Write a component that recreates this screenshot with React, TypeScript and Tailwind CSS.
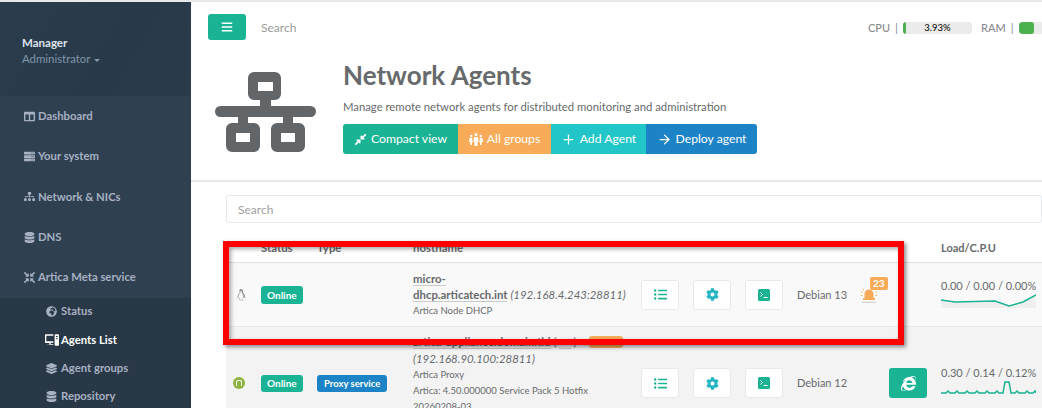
import type { ReactNode } from "react";
import {
  FaBars,
  FaColumns,
  FaCompressAlt,
  FaCompressArrowsAlt,
  FaCog,
  FaDatabase,
  FaGlobeAfrica,
  FaInternetExplorer,
  FaLayerGroup,
  FaLinux,
  FaListUl,
  FaServer,
  FaSitemap,
} from "react-icons/fa";
import { ArrowRight, Plus } from "lucide-react";

const menu = [
  { label: "Dashboard", icon: <FaColumns /> },
  { label: "Your system", icon: <FaServer /> },
  { label: "Network & NICs", icon: <FaSitemap /> },
  { label: "DNS", icon: <FaDatabase /> },
  { label: "Artica Meta service", icon: <FaCompressArrowsAlt /> },
];

const submenu = [
  { label: "Status", icon: <FaGlobeAfrica />, active: false },
  { label: "Agents List", icon: <AgentsIcon />, active: true },
  { label: "Agent groups", icon: <FaLayerGroup />, active: false },
  { label: "Repository", icon: <FaDatabase />, active: false },
];

function AgentsIcon() {
  return (
    <svg viewBox="0 0 16 13" className="h-[12px] w-[14px] shrink-0" fill="currentColor">
      <path d="M0 1a1 1 0 0 1 1-1h8.500v1.500H1.500v6.500h8v1.500H6.500v1.500h3V12H2.500v-.500h2.500V10H1a1 1 0 0 1-1-1z" />
      <path d="M11 1a1 1 0 0 1 1-1h3a1 1 0 0 1 1 1v11a1 1 0 0 1-1 1h-3a1 1 0 0 1-1-1zm1.500 1v1h2V2zm0 2.500v1h2v-1z" fillRule="evenodd" />
    </svg>
  );
}

function GroupIcon() {
  return (
    <svg viewBox="0 0 14 13" className="h-[13px] w-[14px]" fill="currentColor">
      <circle cx="7" cy="1.600" r="1.500" />
      <circle cx="2.200" cy="3" r="1.300" />
      <circle cx="11.800" cy="3" r="1.300" />
      <path d="M5 4h4l.5 5H8.500v4h-3V9H4.500zM.5 5h2.700l.4 4.500H3v2.500H1.300V9H0zM10.800 5h2.700l.5 4h-1.300v3H11V9.500h-.6z" />
    </svg>
  );
}

function NetworkIcon() {
  return (
    <svg viewBox="0 0 101 80" className="h-20 w-[101px]" fill="#636669">
      <path
        fillRule="evenodd"
        d="M39 0h21a6 6 0 0 1 6 6v16a6 6 0 0 1-6 6h-4v6h39.500a5.500 5.500 0 0 1 0 11H78v6h6a6 6 0 0 1 6 6v17a6 6 0 0 1-6 6H62a6 6 0 0 1-6-6V57a6 6 0 0 1 6-6h6v-6H33v6h6a6 6 0 0 1 6 6v17a6 6 0 0 1-6 6H17a6 6 0 0 1-6-6V57a6 6 0 0 1 6-6h6v-6H5.500a5.500 5.500 0 0 1 0-11H45v-6h-6a6 6 0 0 1-6-6V6a6 6 0 0 1 6-6zm4 10v9h15v-9zM21 61v9h14v-9zm45 0v9h14v-9z"
      />
    </svg>
  );
}

function TerminalIcon() {
  return (
    <svg viewBox="0 0 12 12" className="h-[12px] w-[12px]">
      <rect width="12" height="12" rx="1.500" fill="#1ab394" />
      <path d="M2.500 3.500 4.500 5.500 2.500 7.500" stroke="#fff" strokeWidth="1" fill="none" />
      <path d="M5.500 8.500h4" stroke="#fff" strokeWidth="1" />
    </svg>
  );
}

function AlarmIcon() {
  return (
    <svg viewBox="0 0 16 16" className="h-4 w-4" fill="#f8ac59">
      <path d="M3.500 11V7a4.500 4.500 0 0 1 9 0v4h1.500v2H2v-2z" />
      <path d="M0 4.500h1.500v1H0zM14.500 4.500H16v1h-1.500zM0 8h1.500v1H0zM14.500 8H16v1h-1.500zM2 1.500l1 1-.7.700-1-1zM14 1.500l-1 1 .7.700 1-1z" />
      <path d="M1 14.800h14v1H1z" fill="#c9c9c9" />
    </svg>
  );
}

function ActionButton({ children }: { children: ReactNode }) {
  return (
    <button
      type="button"
      className="flex h-[30px] w-[38px] items-center justify-center rounded-[3px] border border-[#e7eaec] bg-white text-[13px] text-[#1ab394]"
    >
      {children}
    </button>
  );
}

function RowActions() {
  return (
    <div className="flex gap-[14px]">
      <ActionButton>
        <FaListUl />
      </ActionButton>
      <ActionButton>
        <FaCog className="text-[#23b5c0]" />
      </ActionButton>
      <ActionButton>
        <TerminalIcon />
      </ActionButton>
    </div>
  );
}

function Sidebar() {
  return (
    <aside className="flex w-[191px] shrink-0 flex-col overflow-hidden bg-[#2f4050] text-[11.300px] font-bold text-[#a7b1c2]">
      <div className="flex h-[94px] shrink-0 flex-col justify-center bg-[linear-gradient(120deg,#2b3d4d_0%,#283a4a_60%,#2a3b4b_100%)] pt-[4px] pl-[22px]">
        <div className="text-[11.500px] leading-[16px] font-bold text-[#dfe4ed]">Manager</div>
        <div className="flex items-center gap-1 text-[11.400px] leading-[16px] font-normal text-[#8095a8]">
          Administrator
          <span className="mt-[2px] border-x-[3px] border-t-[3px] border-x-transparent border-t-[#8095a8]" />
        </div>
      </div>
      <nav className="flex shrink-0 flex-col">
        {menu.map((item) => (
          <div key={item.label} className="flex h-[40.400px] items-center gap-[3px] pl-[24px]">
            <span className="flex w-[11px] justify-center text-[11px]">{item.icon}</span>
            {item.label}
          </div>
        ))}
      </nav>
      <div className="flex flex-1 flex-col bg-[#293846]">
        {submenu.map((item) => (
          <div
            key={item.label}
            className={`-mt-[0.200px] flex h-[28.300px] shrink-0 items-center gap-[4px] pl-[46px] ${item.active ? "text-white" : ""}`}
          >
            <span className="flex w-[11px] justify-center text-[11px]">{item.icon}</span>
            {item.label}
          </div>
        ))}
      </div>
    </aside>
  );
}

function Meter({ label, value, text }: { label: string; value: number; text?: string }) {
  return (
    <div className="flex items-center">
      <span className="mt-[1px] text-[11px] font-medium text-[#8a8c8e]">{label}</span>
      <span className="mx-[5px] text-[11.500px] text-[#8a8c8e]">|</span>
      <div className="relative h-[12px] w-[69px] shrink-0 overflow-hidden rounded-[3px] bg-[#ebebeb]">
        <div className="h-full rounded-[3px] bg-[#4caf50]" style={{ width: `${value}%` }} />
        {text && (
          <span className="absolute inset-0 text-center text-[9.500px] leading-[12px] text-black">{text}</span>
        )}
      </div>
    </div>
  );
}

function TopBar() {
  return (
    <div className="flex h-[52px] items-center pb-[2px] pl-[17px]">
      <button
        type="button"
        className="flex h-[26px] w-[38px] items-center justify-center rounded-[3px] bg-[#1ab394] text-[12px] text-white"
      >
        <FaBars />
      </button>
      <span className="mt-[2px] ml-[15px] text-[12px] text-[#9a9a9a]">Search</span>
      <div className="mt-[2px] ml-auto flex w-[174px] shrink-0 gap-[9px] overflow-hidden">
        <Meter label="CPU" value={4} text="3.93%" />
        <Meter label="RAM" value={23} />
      </div>
    </div>
  );
}

const headerButtons = [
  { label: "Compact view", width: "w-[115px]", bg: "bg-[#1ab394]", icon: <FaCompressAlt className="text-[13px]" /> },
  { label: "All groups", width: "w-[93px]", bg: "bg-[#f8ac59]", icon: <GroupIcon /> },
  { label: "Add Agent", width: "w-[95px]", bg: "bg-[#23c6c8]", icon: <Plus size={15} /> },
  { label: "Deploy agent", width: "w-[111px]", bg: "bg-[#1c84c6]", icon: <ArrowRight size={15} /> },
];

function Header() {
  return (
    <div className="flex h-[128px] border-b-2 border-[#e7eaec] pl-[24px]">
      <div className="pt-[18px]">
        <NetworkIcon />
      </div>
      <div className="ml-[27px] pt-[4px]">
        <h1 className="text-[26px] leading-[34px] font-bold text-[#676a6c]">Network Agents</h1>
        <p className="mt-[7px] text-[11.300px] leading-[16px] text-[#676a6c]">
          Manage remote network agents for distributed monitoring and administration
        </p>
        <div className="mt-[9px] flex overflow-hidden rounded-[3px]">
          {headerButtons.map((b) => (
            <button
              key={b.label}
              type="button"
              className={`flex h-[30px] items-center justify-center gap-[4px] text-[12.200px] text-white ${b.width} ${b.bg}`}
            >
              {b.icon}
              {b.label}
            </button>
          ))}
        </div>
      </div>
    </div>
  );
}

function Hostname({ children }: { children: ReactNode }) {
  return <span className="border-b border-[#c9c9c9] font-bold text-[#676a6c]">{children}</span>;
}

function AgentTable() {
  return (
    <div className="mt-[13px] ml-[35px]">
      <div className="flex h-[28px] items-center rounded-[2px] border border-[#e7eaec] pt-[2px] pl-[11px] text-[12px] text-[#a0a0a0]">
        Search
      </div>
      <div className="mt-[15px] grid grid-cols-[35px_56px_96px_228px_156px_92px_52px_1fr] text-[11.400px] leading-[16px] text-[#676a6c]">
        <div className="col-span-8 grid h-[25px] grid-cols-subgrid items-center border-b border-[#e0e0e0] pb-[5px] font-bold">
          <span />
          <span>Status</span>
          <span>Type</span>
          <span>hostname</span>
          <span />
          <span />
          <span />
          <span className="text-[11px]">Load/C.P.U</span>
        </div>

        <div className="col-span-8 grid h-[64px] grid-cols-subgrid items-center border-b border-[#e7eaec] bg-[#f9f9f9]">
          <FaLinux className="ml-[9px] text-[12px] text-[#8a8c8e]" />
          <span className="w-fit rounded-[3px] bg-[#1ab394] px-[6px] text-[10px] leading-[18px] font-bold text-white">Online</span>
          <span />
          <div className="pr-[8px]">
            <Hostname>micro-</Hostname>
            <br />
            <span className="whitespace-nowrap">
              <Hostname>dhcp.articatech.int</Hostname> <em>(192.168.4.243:28811)</em>
            </span>
            <div className="text-[9.500px]">Artica Node DHCP</div>
          </div>
          <RowActions />
          <div className="flex items-center whitespace-nowrap">
            <span className="w-[64px] text-[11px]">Debian 13</span>
            <div className="relative">
              <AlarmIcon />
              <span className="absolute -top-[10px] left-[9px] rounded-[2px] bg-[#f8ac59] px-[3px] text-[10px] leading-[13px] font-bold text-white">23</span>
            </div>
          </div>
          <span />
          <div className="-mt-[4px]">
            <div className="text-[11px] whitespace-nowrap">0.00 / 0.00 / 0.00%</div>
            <svg viewBox="0 0 95 14" className="h-[14px] w-[95px]">
              <path d="M0 6 14 8 54 7 68 12 82 8 95 1V14H0z" fill="#efefef" />
              <path d="M0 6 14 8 54 7 68 12 82 8 95 1" fill="none" stroke="#1ab394" strokeWidth="1.500" />
            </svg>
          </div>
        </div>

        <div className="col-span-8 grid h-[112px] grid-cols-subgrid items-center bg-[#f3f3f3]">
          <span className="ml-[7px] flex h-[12px] w-[12px] items-center justify-center rounded-full bg-[#8cb33e]">
            <span className="h-[6px] w-[6px] rounded-t-[2px] border border-b-0 border-white" />
          </span>
          <span className="w-fit rounded-[3px] bg-[#1ab394] px-[6px] text-[10px] leading-[17px] font-bold text-white">Online</span>
          <span className="w-fit rounded-[3px] bg-[#1c84c6] px-[7px] text-[9.500px] leading-[17px] font-bold whitespace-nowrap text-white">Proxy service</span>
          <div className="self-start pt-[7px] pr-[8px]">
            <div className="whitespace-nowrap">
              <Hostname>artica-appliance.domain.tld</Hostname> ( <Hostname>&nbsp;&nbsp;&nbsp;&nbsp;</Hostname> )
              <span className="ml-[12px] rounded-[3px] bg-[#f8ac59] px-[16px] text-[10px] leading-[17px] text-white">&nbsp;</span>
            </div>
            <em>(192.168.90.100:28811)</em>
            <div className="text-[9.500px]">Artica Proxy</div>
            <div className="text-[9.500px] whitespace-nowrap">Artica: 4.50.000000 Service Pack 5 Hotfix</div>
            <div className="text-[9.500px]">20260208-03</div>
          </div>
          <RowActions />
          <span className="text-[11px] whitespace-nowrap">Debian 12</span>
          <button
            type="button"
            className="flex h-[30px] w-[38px] items-center justify-center rounded-[3px] bg-[#1ab394] text-[15px] text-white"
          >
            <FaInternetExplorer />
          </button>
          <div className="-mt-[6px]">
            <div className="text-[11px] whitespace-nowrap">0.30 / 0.14 / 0.12%</div>
            <svg viewBox="0 0 95 14" className="h-[14px] w-[95px]">
              <path
                d="M0 12H5L7 10 9 12H14L16 10 18 12H24L26 10 28 12H34L36 10 38 12H44L46 10 48 12H54L56 10 58 12H62L64 1H68L70 12H74L76 10 78 12H84L86 10 88 12H92L94 10 95 12"
                fill="none"
                stroke="#1ab394"
                strokeWidth="1.500"
              />
            </svg>
          </div>
        </div>
      </div>
    </div>
  );
}

export default function App() {
  return (
    <div className="relative h-[408px] w-[1042px] overflow-hidden border-t-2 border-[#e7eaec] bg-white font-['Lato',sans-serif]">
      <div className="flex h-full">
        <Sidebar />
        <main className="min-w-0 flex-1">
          <TopBar />
          <Header />
          <AgentTable />
        </main>
      </div>
      {/* annotation drawn over the first row */}
      <div className="absolute top-[239px] left-[223px] h-[104px] w-[681px] border-[6px] border-[#ff0000] shadow-[2px_2px_4px_rgba(0,0,0,0.45),inset_2px_2px_4px_rgba(0,0,0,0.35)]" />
    </div>
  );
}
